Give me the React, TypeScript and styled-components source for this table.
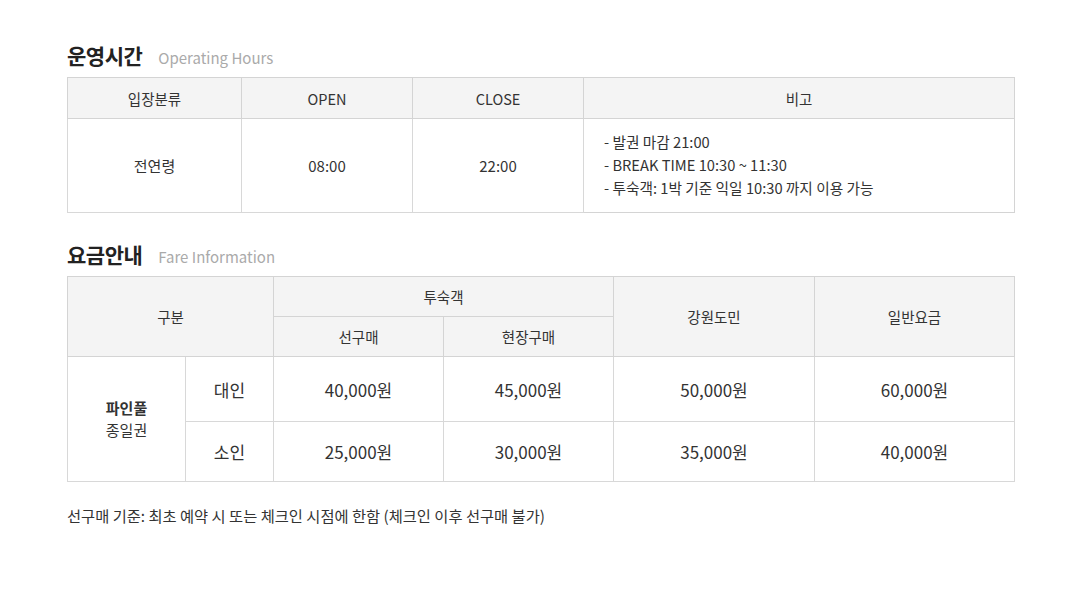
import React from 'react';
import styled, { createGlobalStyle } from 'styled-components';

const GlobalStyle = createGlobalStyle`
	body {
		margin: 0;
		background: #fff;
		font-family: 'Noto Sans CJK KR', 'Noto Sans', sans-serif;
		color: #333;
	}
`;

const Page = styled.div`
	width: 948px;
	padding: 40px 0 0 67px;
`;

const SectionTitle = styled.h2<{ $top?: number }>`
	display: flex;
	align-items: baseline;
	gap: 16px;
	margin: ${(p) => p.$top ?? 0}px 0 7px;
	height: 30px;
	line-height: 30px;
	font-size: 21px;
	font-weight: 700;
	color: #222;
	letter-spacing: -0.5px;
`;

const SubTitle = styled.span`
	font-size: 15px;
	font-weight: 400;
	color: #aaa;
	letter-spacing: 0;
`;

const Table = styled.table`
	width: 948px;
	border-collapse: collapse;
	border: 1px solid #ccc;
	table-layout: fixed;
	font-size: 14px;
	color: #333;
`;

const Th = styled.th<{ $h?: number }>`
	height: ${(p) => p.$h ?? 40}px;
	padding: 0;
	background: #f4f4f4;
	border: 1px solid #d4d4d4;
	font-weight: 400;
	font-size: 14.5px;
	text-align: center;
	vertical-align: middle;
`;

const Td = styled.td<{ $h?: number; $price?: boolean }>`
	height: ${(p) => p.$h ?? 60}px;
	padding: 0;
	border: 1px solid #d8d8d8;
	text-align: center;
	vertical-align: middle;
	font-size: ${(p) => (p.$price ? 17 : 15)}px;
`;

const NoteCell = styled.td`
	padding: 0 0 2px 20px;
	border: 1px solid #d4d4d4;
	text-align: left;
	vertical-align: middle;
`;

const NoteList = styled.ul`
	margin: 0;
	padding: 0;
	list-style: none;
	font-size: 14.7px;
	line-height: 23px;
`;

const Strong = styled.div`
	font-weight: 700;
	line-height: 22px;
`;

const Sub = styled.div`
	line-height: 22px;
`;

const Footnote = styled.p`
	margin: 23px 0 0;
	font-size: 15.3px;
	line-height: 20px;
	color: #333;
`;

const prices = [
	{ label: '대인', values: ['40,000원', '45,000원', '50,000원', '60,000원'], h: 64 },
	{ label: '소인', values: ['25,000원', '30,000원', '35,000원', '40,000원'], h: 59 },
];

export default function App() {
	return (
		<Page>
			<GlobalStyle />
			<SectionTitle>
				운영시간 <SubTitle>Operating Hours</SubTitle>
			</SectionTitle>
			<Table>
				<colgroup>
					<col style={{ width: 174 }} />
					<col style={{ width: 171 }} />
					<col style={{ width: 171 }} />
					<col />
				</colgroup>
				<thead>
					<tr>
						<Th>입장분류</Th>
						<Th>OPEN</Th>
						<Th>CLOSE</Th>
						<Th>비고</Th>
					</tr>
				</thead>
				<tbody>
					<tr>
						<Td $h={93}>전연령</Td>
						<Td $h={93}>08:00</Td>
						<Td $h={93}>22:00</Td>
						<NoteCell>
							<NoteList>
								<li>- 발권 마감 21:00</li>
								<li>- BREAK TIME 10:30 ~ 11:30</li>
								<li>- 투숙객: 1박 기준 익일 10:30 까지 이용 가능</li>
							</NoteList>
						</NoteCell>
					</tr>
				</tbody>
			</Table>

			<SectionTitle $top={26}>
				요금안내 <SubTitle>Fare Information</SubTitle>
			</SectionTitle>
			<Table>
				<colgroup>
					<col style={{ width: 118 }} />
					<col style={{ width: 88 }} />
					<col style={{ width: 170 }} />
					<col style={{ width: 170 }} />
					<col style={{ width: 201 }} />
					<col />
				</colgroup>
				<thead>
					<tr>
						<Th colSpan={2} rowSpan={2}>구분</Th>
						<Th colSpan={2} $h={39}>투숙객</Th>
						<Th rowSpan={2}>강원도민</Th>
						<Th rowSpan={2}>일반요금</Th>
					</tr>
					<tr>
						<Th $h={39}>선구매</Th>
						<Th $h={39}>현장구매</Th>
					</tr>
				</thead>
				<tbody>
					{prices.map((row, i) => (
						<tr key={row.label}>
							{i === 0 && (
								<Td rowSpan={2}>
									<Strong>파인풀</Strong>
									<Sub>종일권</Sub>
								</Td>
							)}
							<Td $h={row.h} $price>{row.label}</Td>
							{row.values.map((v, j) => (
								<Td key={j} $h={row.h} $price>
									{v}
								</Td>
							))}
						</tr>
					))}
				</tbody>
			</Table>

			<Footnote>선구매 기준: 최초 예약 시 또는 체크인 시점에 한함 (체크인 이후 선구매 불가)</Footnote>
		</Page>
	);
}
